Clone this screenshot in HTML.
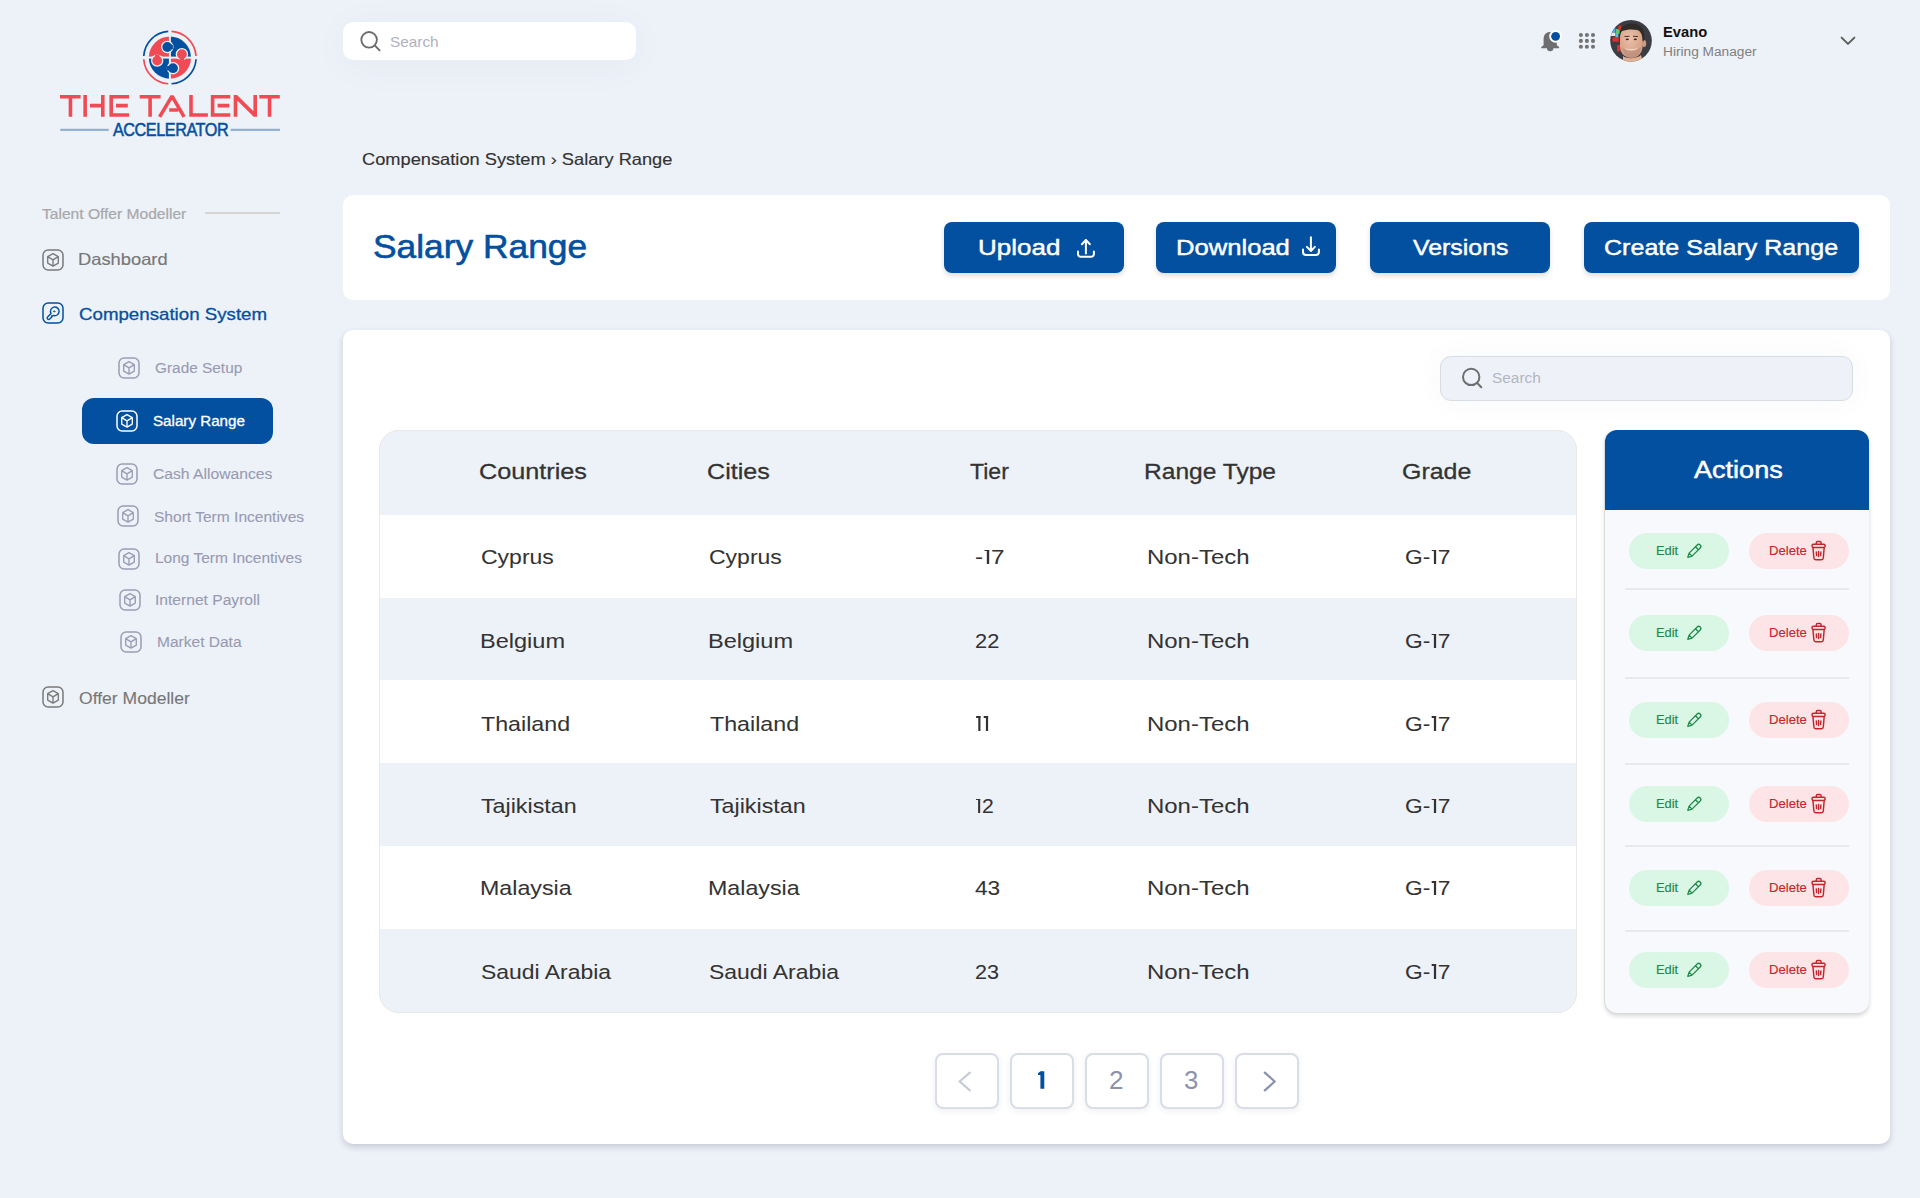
<!DOCTYPE html>
<html><head><meta charset="utf-8"><title>Salary Range</title>
<style>
html,body{margin:0;padding:0;width:1920px;height:1198px;overflow:hidden;background:#EDF1F8;font-family:"Liberation Sans",sans-serif;}
.a{position:absolute;box-sizing:border-box;}
.t{position:absolute;white-space:nowrap;line-height:1;transform-origin:0 0;z-index:5;}
svg{position:absolute;overflow:visible;}
.one{display:inline-block;width:0.33em;height:0.69em;position:relative}.one::before{content:"";position:absolute;left:0.143em;width:0.093em;top:0;bottom:0;background:currentColor}.one::after{content:"";position:absolute;left:0.06em;width:0.18em;top:0;height:0.073em;background:currentColor}
</style></head><body>
<svg style="left:0;top:0" width="300" height="150" viewBox="0 0 300 150"><path d="M143.75 55.95 A26.2 26.2 0 0 1 168.25 31.45" stroke="#0350A0" stroke-width="1.7" fill="none"/><path d="M171.55 31.45 A26.2 26.2 0 0 1 196.05 55.95" stroke="#F04B55" stroke-width="1.7" fill="none"/><path d="M196.05 59.25 A26.2 26.2 0 0 1 171.55 83.75" stroke="#0350A0" stroke-width="1.7" fill="none"/><path d="M168.25 83.75 A26.2 26.2 0 0 1 143.75 59.25" stroke="#F04B55" stroke-width="1.7" fill="none"/><path d="M169.9 57.6 L148.80 57.60 A21.1 21.1 0 0 1 169.90 36.50 Z" fill="#F04B55"/><path d="M169.9 57.6 L169.90 36.50 A21.1 21.1 0 0 1 191.00 57.60 Z" fill="#0350A0"/><path d="M169.9 57.6 L191.00 57.60 A21.1 21.1 0 0 1 169.90 78.70 Z" fill="#F04B55"/><path d="M169.9 57.6 L169.90 78.70 A21.1 21.1 0 0 1 148.80 57.60 Z" fill="#0350A0"/><rect x="168.9" y="35.6" width="2.0" height="44" fill="#EDF1F8"/><rect x="147.9" y="56.6" width="44" height="2.0" fill="#EDF1F8"/><circle cx="167.3" cy="47.0" r="6.2" fill="#EDF1F8"/><circle cx="181.9" cy="54.2" r="6.2" fill="#EDF1F8"/><circle cx="157.2" cy="60.6" r="6.2" fill="#EDF1F8"/><circle cx="173.0" cy="68.2" r="6.2" fill="#EDF1F8"/><rect x="167.3" y="44.8" width="5.599999999999994" height="4.4" fill="#0350A0"/><circle cx="167.3" cy="47.0" r="4.9" fill="#0350A0"/><rect x="179.70000000000002" y="54.2" width="4.4" height="6.399999999999999" fill="#F04B55"/><circle cx="181.9" cy="54.2" r="4.9" fill="#F04B55"/><rect x="155.0" y="54.6" width="4.4" height="6.0" fill="#F04B55"/><circle cx="157.2" cy="60.6" r="4.9" fill="#F04B55"/><rect x="166.9" y="66.0" width="6.099999999999994" height="4.4" fill="#0350A0"/><circle cx="173.0" cy="68.2" r="4.9" fill="#0350A0"/><path d="M60 96.7 L80.6 96.7 M70.45 94.9 L70.45 116.8 M85.15 94.9 L85.15 116.8 M102.8 94.9 L102.8 116.8 M90 105.6 L102.8 105.6 M111.2 94.9 L111.2 116.8 M109.5 96.7 L129 96.7 M116 105.6 L127.8 105.6 M109.5 115.0 L129 115.0 M139.7 96.7 L160.6 96.7 M150.1 94.9 L150.1 116.8 M159.6 116.8 L172.0 96.10000000000001 L184.1 116.8 M169.2 110.0 L178.2 110.0 M191.0 94.9 L191.0 116.8 M189.3 115.0 L207.9 115.0 M212.6 94.9 L212.6 116.8 M210.9 96.7 L230.3 96.7 M217.6 105.6 L229.3 105.6 M210.9 115.0 L230.3 115.0 M235.5 116.8 L235.5 94.9 M235.5 96.10000000000001 L255.2 115.6 M255.2 116.8 L255.2 94.9 M259.3 96.7 L279.8 96.7 M269.55 94.9 L269.55 116.8" stroke="#F04B55" stroke-width="3.6" fill="none" stroke-linejoin="bevel"/><rect x="60.3" y="128.8" width="48.5" height="2.1" fill="#8EAED2"/><rect x="230.6" y="128.8" width="49.4" height="2.1" fill="#8EAED2"/></svg>
<div class="a" style="left:205px;top:212px;width:75px;height:2px;background:#D7D5D2"></div>
<svg style="left:42.25px;top:249.15px" width="22" height="22" viewBox="0 0 22 22"><g fill="none" stroke="#7A7A7A" stroke-linejoin="round" stroke-linecap="round"><rect x="1" y="1" width="20" height="20" rx="5.2" stroke-width="1.5"/><path d="M11 4.7 L16.3 7.6 L16.3 14.1 L11 17.1 L5.7 14.1 L5.7 7.6 Z M5.7 7.6 L11 10.8 L16.3 7.6 M11 10.8 L11 17.1" stroke-width="1.35"/></g></svg>
<svg style="left:42.25px;top:302.15px" width="22" height="22" viewBox="0 0 22 22"><g fill="none" stroke="#0350A0" stroke-linejoin="round" stroke-linecap="round"><rect x="1" y="1" width="20" height="20" rx="5.2" stroke-width="1.5"/><path d="M9.0 11.4 A4.3 4.3 0 1 1 11.3 13.4 L10.6 14.1 L9.6 13.9 L9.8 15.0 L7.7 17.1 A1.45 1.45 0 0 1 5.6 15.0 Z" stroke-width="1.4"/><circle cx="12.2" cy="9.4" r="0.6" fill="#0350A0" stroke-width="0.9"/></g></svg>
<div class="a" style="left:82px;top:398px;width:191px;height:46px;border-radius:12px;background:#0350A0"></div>
<svg style="left:118.15px;top:357.25px" width="22" height="22" viewBox="0 0 22 22"><g fill="none" stroke="#9A9DB4" stroke-linejoin="round" stroke-linecap="round"><rect x="1" y="1" width="20" height="20" rx="5.2" stroke-width="1.5"/><path d="M11 4.7 L16.3 7.6 L16.3 14.1 L11 17.1 L5.7 14.1 L5.7 7.6 Z M5.7 7.6 L11 10.8 L16.3 7.6 M11 10.8 L11 17.1" stroke-width="1.35"/></g></svg>
<svg style="left:116.35px;top:463.15px" width="22" height="22" viewBox="0 0 22 22"><g fill="none" stroke="#9A9DB4" stroke-linejoin="round" stroke-linecap="round"><rect x="1" y="1" width="20" height="20" rx="5.2" stroke-width="1.5"/><path d="M11 4.7 L16.3 7.6 L16.3 14.1 L11 17.1 L5.7 14.1 L5.7 7.6 Z M5.7 7.6 L11 10.8 L16.3 7.6 M11 10.8 L11 17.1" stroke-width="1.35"/></g></svg>
<svg style="left:117.35px;top:505.35px" width="22" height="22" viewBox="0 0 22 22"><g fill="none" stroke="#9A9DB4" stroke-linejoin="round" stroke-linecap="round"><rect x="1" y="1" width="20" height="20" rx="5.2" stroke-width="1.5"/><path d="M11 4.7 L16.3 7.6 L16.3 14.1 L11 17.1 L5.7 14.1 L5.7 7.6 Z M5.7 7.6 L11 10.8 L16.3 7.6 M11 10.8 L11 17.1" stroke-width="1.35"/></g></svg>
<svg style="left:118.05px;top:547.55px" width="22" height="22" viewBox="0 0 22 22"><g fill="none" stroke="#9A9DB4" stroke-linejoin="round" stroke-linecap="round"><rect x="1" y="1" width="20" height="20" rx="5.2" stroke-width="1.5"/><path d="M11 4.7 L16.3 7.6 L16.3 14.1 L11 17.1 L5.7 14.1 L5.7 7.6 Z M5.7 7.6 L11 10.8 L16.3 7.6 M11 10.8 L11 17.1" stroke-width="1.35"/></g></svg>
<svg style="left:119.15px;top:589.45px" width="22" height="22" viewBox="0 0 22 22"><g fill="none" stroke="#9A9DB4" stroke-linejoin="round" stroke-linecap="round"><rect x="1" y="1" width="20" height="20" rx="5.2" stroke-width="1.5"/><path d="M11 4.7 L16.3 7.6 L16.3 14.1 L11 17.1 L5.7 14.1 L5.7 7.6 Z M5.7 7.6 L11 10.8 L16.3 7.6 M11 10.8 L11 17.1" stroke-width="1.35"/></g></svg>
<svg style="left:120.15px;top:631.45px" width="22" height="22" viewBox="0 0 22 22"><g fill="none" stroke="#9A9DB4" stroke-linejoin="round" stroke-linecap="round"><rect x="1" y="1" width="20" height="20" rx="5.2" stroke-width="1.5"/><path d="M11 4.7 L16.3 7.6 L16.3 14.1 L11 17.1 L5.7 14.1 L5.7 7.6 Z M5.7 7.6 L11 10.8 L16.3 7.6 M11 10.8 L11 17.1" stroke-width="1.35"/></g></svg>
<svg style="left:116.0px;top:410.15px" width="22" height="22" viewBox="0 0 22 22"><g fill="none" stroke="#FFFFFF" stroke-linejoin="round" stroke-linecap="round"><rect x="1" y="1" width="20" height="20" rx="5.2" stroke-width="1.5"/><path d="M11 4.7 L16.3 7.6 L16.3 14.1 L11 17.1 L5.7 14.1 L5.7 7.6 Z M5.7 7.6 L11 10.8 L16.3 7.6 M11 10.8 L11 17.1" stroke-width="1.35"/></g></svg>
<svg style="left:42.25px;top:685.85px" width="22" height="22" viewBox="0 0 22 22"><g fill="none" stroke="#7A7A7A" stroke-linejoin="round" stroke-linecap="round"><rect x="1" y="1" width="20" height="20" rx="5.2" stroke-width="1.5"/><path d="M11 4.7 L16.3 7.6 L16.3 14.1 L11 17.1 L5.7 14.1 L5.7 7.6 Z M5.7 7.6 L11 10.8 L16.3 7.6 M11 10.8 L11 17.1" stroke-width="1.35"/></g></svg>
<div class="a" style="left:343px;top:22px;width:293px;height:38px;border-radius:10px;background:#fff;box-shadow:0 5px 40px rgba(60,80,140,0.04)"></div>
<svg style="left:355px;top:26px" width="32" height="32" viewBox="355 26 32 32"><circle cx="369.1" cy="39.8" r="7.8" stroke="#6B6B6B" stroke-width="1.8" fill="none"/><path d="M375.2 45.9 L379.6 50.3" stroke="#6B6B6B" stroke-width="1.9" stroke-linecap="round"/></svg>
<svg style="left:1535px;top:24px" width="30" height="32" viewBox="1535 24 30 32"><path d="M1543.6 45.2 L1543.6 38.8 C1543.6 34.6 1546.4 31.9 1550.2 31.9 C1554.0 31.9 1556.8 34.6 1556.8 38.8 L1556.8 45.2 L1559.1 47.0 L1559.1 48.3 L1541.3 48.3 L1541.3 47.0 Z" fill="#6E6E72"/><path d="M1547.0 48.0 L1553.4 48.0 A3.2 3.2 0 0 1 1547.0 48.0 Z" fill="#6E6E72"/><circle cx="1555.6" cy="36.3" r="6.4" fill="#FFFFFF"/><circle cx="1555.6" cy="36.3" r="4.4" fill="#0350A0"/></svg>
<svg style="left:1576px;top:30px" width="22" height="22" viewBox="1576 30 22 22"><circle cx="1580.9" cy="35.0" r="2.05" fill="#737373"/><circle cx="1580.9" cy="40.9" r="2.05" fill="#737373"/><circle cx="1580.9" cy="46.8" r="2.05" fill="#737373"/><circle cx="1586.9" cy="35.0" r="2.05" fill="#737373"/><circle cx="1586.9" cy="40.9" r="2.05" fill="#737373"/><circle cx="1586.9" cy="46.8" r="2.05" fill="#737373"/><circle cx="1593.0" cy="35.0" r="2.05" fill="#737373"/><circle cx="1593.0" cy="40.9" r="2.05" fill="#737373"/><circle cx="1593.0" cy="46.8" r="2.05" fill="#737373"/></svg>
<svg style="left:1610px;top:20px" width="42" height="42" viewBox="0 0 42 42"><defs><clipPath id="av"><circle cx="21" cy="20.8" r="20.8"/></clipPath><radialGradient id="sk" cx="0.45" cy="0.35" r="0.7"><stop offset="0" stop-color="#EBC0A8"/><stop offset="1" stop-color="#D29A80"/></radialGradient></defs><g clip-path="url(#av)">
<rect width="42" height="42" fill="#3C3D42"/>
<rect x="2" y="8" width="3.4" height="4.7" fill="#4FA8E0"/><rect x="5.8" y="8.9" width="3.8" height="5.1" fill="#5CC878"/><rect x="0.8" y="12.7" width="4.6" height="3.3" fill="#EDE3E6"/><rect x="5.4" y="14" width="2.9" height="3.7" fill="#5BB8EC"/><rect x="8.3" y="5.6" width="2.9" height="4.2" fill="#D8302C"/><rect x="2.5" y="17.3" width="6.2" height="4.5" fill="#D8302C"/><rect x="7" y="25" width="3.4" height="6.4" fill="#D8302C"/>
<path d="M13 42 L13 36 C16 39 27 39 31 35 L33 42 Z" fill="#E4B092"/>
<path d="M10 18 C10 10 14 7.5 21 7.5 C28 7.5 32.5 10 32.5 18 L32.5 27 C32 34 27 38 21.5 38 C15.5 38 10.5 34 10 27 Z" fill="url(#sk)"/>
<ellipse cx="34" cy="23.5" rx="2.2" ry="3.6" fill="#CF9A80"/>
<path d="M9.5 17 C9 8 14 3.5 22 3.5 C30 3.5 35 8 34.5 19 L33 22 C32.5 15 31 11 27 10 C22 9 16 9.5 12 11 C10.5 12.5 10 15 9.5 17 Z" fill="#2F2B28"/>
<path d="M12 27 C13 34 17 38 21.5 38 C26 38 30.5 34 31 27 C28 30 25 31 21.5 31 C18 31 15 30 12 27 Z" fill="#A88070" opacity="0.45"/>
<path d="M15 27.5 C17.5 30 25 30 27.5 27.5 C26 31 17 31 15 27.5 Z" fill="#F6EEE9"/>
<ellipse cx="17.3" cy="19.3" rx="1.6" ry="0.9" fill="#3A2820"/><ellipse cx="25.3" cy="19.3" rx="1.6" ry="0.9" fill="#3A2820"/>
<path d="M14.5 16.5 L19.5 16.2 M23 16.2 L28 16.5" stroke="#4A3428" stroke-width="1.1"/>
</g></svg>
<svg style="left:1836px;top:32px" width="24" height="18" viewBox="1836 32 24 18"><path d="M1841.6 37.6 L1848.0 43.9 L1854.4 37.6" stroke="#5A5A5A" stroke-width="1.9" fill="none" stroke-linecap="round" stroke-linejoin="round"/></svg>
<div class="a" style="left:343px;top:195px;width:1547px;height:105px;border-radius:10px;background:#fff"></div>
<div class="a" style="left:944px;top:222px;width:180px;height:51px;border-radius:8px;background:#0350A0;box-shadow:0 3px 5px rgba(0,0,0,0.13)"></div>
<div class="a" style="left:1156px;top:222px;width:180px;height:51px;border-radius:8px;background:#0350A0;box-shadow:0 3px 5px rgba(0,0,0,0.13)"></div>
<div class="a" style="left:1370px;top:222px;width:180px;height:51px;border-radius:8px;background:#0350A0;box-shadow:0 3px 5px rgba(0,0,0,0.13)"></div>
<div class="a" style="left:1584px;top:222px;width:275px;height:51px;border-radius:8px;background:#0350A0;box-shadow:0 3px 5px rgba(0,0,0,0.13)"></div>
<svg style="left:1070px;top:232px;z-index:6" width="30" height="30" viewBox="1070 232 30 30"><g stroke="#fff" stroke-width="2" fill="none" stroke-linecap="round" stroke-linejoin="round"><path d="M1085.9 240.0 L1085.9 253.5 M1081.9 244.2 L1085.9 240.0 L1089.9 244.2"/><path d="M1078.0 251.4 L1078.0 254.0 A2.8 2.8 0 0 0 1080.8 256.8 L1091.1 256.8 A2.8 2.8 0 0 0 1093.9 254.0 L1093.9 251.4"/></g></svg>
<svg style="left:1296px;top:232px;z-index:6" width="30" height="30" viewBox="1296 232 30 30"><g stroke="#fff" stroke-width="2" fill="none" stroke-linecap="round" stroke-linejoin="round"><path d="M1310.9 237.3 L1310.9 251.0 M1306.9 246.9 L1310.9 251.0 L1314.9 246.9"/><path d="M1303.0 249.4 L1303.0 252.1 A2.8 2.8 0 0 0 1305.8 254.9 L1316.1 254.9 A2.8 2.8 0 0 0 1318.9 252.1 L1318.9 249.4"/></g></svg>
<div class="a" style="left:343px;top:330px;width:1547px;height:814px;border-radius:10px;background:#fff;box-shadow:0 3px 6px rgba(40,50,80,0.2)"></div>
<div class="a" style="left:1440px;top:356px;width:413px;height:45px;border-radius:11px;background:#EEF2F8;border:1px solid #D8DCE5;box-shadow:0 0 30px rgba(60,80,140,0.04)"></div>
<svg style="left:1458px;top:364px" width="30" height="30" viewBox="1458 364 30 30"><circle cx="1471.2" cy="376.9" r="8.2" stroke="#6E6E6E" stroke-width="2" fill="none"/><path d="M1477.4 383.3 L1481.3 387.3" stroke="#6E6E6E" stroke-width="2" stroke-linecap="round"/></svg>
<div class="a" style="left:379px;top:430px;width:1198px;height:583px;border-radius:20px;border:1.5px solid #E9E9EA;overflow:hidden;background:#fff"><div style="position:absolute;left:-1.5px;top:-1.5px;right:-1.5px;bottom:-1.5px"><div style="position:absolute;left:0;top:0;width:100%;height:85px;background:#EDF1F8"></div><div style="position:absolute;left:0;top:85px;width:100%;height:84px;background:#FFFFFF"></div><div style="position:absolute;left:0;top:168px;width:100%;height:83.5px;background:#EDF1F8"></div><div style="position:absolute;left:0;top:250.5px;width:100%;height:83.5px;background:#FFFFFF"></div><div style="position:absolute;left:0;top:333px;width:100%;height:84px;background:#EDF1F8"></div><div style="position:absolute;left:0;top:416px;width:100%;height:84px;background:#FFFFFF"></div><div style="position:absolute;left:0;top:499px;width:100%;height:85px;background:#EDF1F8"></div></div></div>
<div class="a" style="left:379px;top:430px;width:1198px;height:583px;border-radius:20px;border:1.5px solid #E9E9EA;z-index:2"></div>
<div class="a" style="left:1605px;top:430px;width:264px;height:583px;border-radius:12px;background:#F7F9FD;box-shadow:0 3px 4px rgba(0,0,0,0.16),-1px 0 1px rgba(0,0,0,0.09)"></div>
<div class="a" style="left:1605px;top:430px;width:264px;height:80px;border-radius:12px 12px 0 0;background:#0350A0"></div>
<div class="a" style="left:1625px;top:588.2px;width:224px;height:2px;background:#E8E9EA"></div>
<div class="a" style="left:1625px;top:676.6px;width:224px;height:2px;background:#E8E9EA"></div>
<div class="a" style="left:1625px;top:762.6px;width:224px;height:2px;background:#E8E9EA"></div>
<div class="a" style="left:1625px;top:845.4px;width:224px;height:2px;background:#E8E9EA"></div>
<div class="a" style="left:1625px;top:929.8px;width:224px;height:2px;background:#E8E9EA"></div>
<div class="a" style="left:1629px;top:533px;width:100px;height:36px;border-radius:18px;background:#DAF6E5"></div>
<div class="a" style="left:1749px;top:533px;width:100px;height:36px;border-radius:18px;background:#FDE5E7"></div>
<svg style="left:1684px;top:540px;z-index:6" width="22" height="22" viewBox="1684 540 22 22"><g transform="translate(1684 540)" stroke="#1E8A4A" stroke-width="1.25" fill="none" stroke-linejoin="round" stroke-linecap="round"><path d="M5.1 13.1 L13.2 5.0 A2.1 2.1 0 0 1 16.2 8.0 L8.0 16.1 L3.8 17.3 Z M5.1 13.1 L8.0 16.1 M11.5 6.8 L14.4 9.7"/></g></svg>
<svg style="left:1806px;top:538px;z-index:6" width="24" height="26" viewBox="0 0 24 26"><g stroke="#C0262D" stroke-width="1.45" fill="none" stroke-linejoin="round" stroke-linecap="round"><path d="M10.3 6.1 L10.3 4.8 A1.3 1.3 0 0 1 11.6 3.5 L13.8 3.5 A1.3 1.3 0 0 1 15.1 4.8 L15.1 6.1"/><rect x="6.0" y="6.2" width="13.1" height="3.2" rx="1.4"/><path d="M6.9 9.4 L7.9 20.0 A1.8 1.8 0 0 0 9.7 21.7 L15.5 21.7 A1.8 1.8 0 0 0 17.3 20.0 L18.2 9.4"/><path d="M10.3 14.0 L10.6 17.6 M12.6 13.4 L12.6 18.4 M14.9 14.0 L14.6 17.6"/></g></svg>
<div class="a" style="left:1629px;top:615px;width:100px;height:36px;border-radius:18px;background:#DAF6E5"></div>
<div class="a" style="left:1749px;top:615px;width:100px;height:36px;border-radius:18px;background:#FDE5E7"></div>
<svg style="left:1684px;top:622px;z-index:6" width="22" height="22" viewBox="1684 540 22 22"><g transform="translate(1684 540)" stroke="#1E8A4A" stroke-width="1.25" fill="none" stroke-linejoin="round" stroke-linecap="round"><path d="M5.1 13.1 L13.2 5.0 A2.1 2.1 0 0 1 16.2 8.0 L8.0 16.1 L3.8 17.3 Z M5.1 13.1 L8.0 16.1 M11.5 6.8 L14.4 9.7"/></g></svg>
<svg style="left:1806px;top:620px;z-index:6" width="24" height="26" viewBox="0 0 24 26"><g stroke="#C0262D" stroke-width="1.45" fill="none" stroke-linejoin="round" stroke-linecap="round"><path d="M10.3 6.1 L10.3 4.8 A1.3 1.3 0 0 1 11.6 3.5 L13.8 3.5 A1.3 1.3 0 0 1 15.1 4.8 L15.1 6.1"/><rect x="6.0" y="6.2" width="13.1" height="3.2" rx="1.4"/><path d="M6.9 9.4 L7.9 20.0 A1.8 1.8 0 0 0 9.7 21.7 L15.5 21.7 A1.8 1.8 0 0 0 17.3 20.0 L18.2 9.4"/><path d="M10.3 14.0 L10.6 17.6 M12.6 13.4 L12.6 18.4 M14.9 14.0 L14.6 17.6"/></g></svg>
<div class="a" style="left:1629px;top:702px;width:100px;height:36px;border-radius:18px;background:#DAF6E5"></div>
<div class="a" style="left:1749px;top:702px;width:100px;height:36px;border-radius:18px;background:#FDE5E7"></div>
<svg style="left:1684px;top:709px;z-index:6" width="22" height="22" viewBox="1684 540 22 22"><g transform="translate(1684 540)" stroke="#1E8A4A" stroke-width="1.25" fill="none" stroke-linejoin="round" stroke-linecap="round"><path d="M5.1 13.1 L13.2 5.0 A2.1 2.1 0 0 1 16.2 8.0 L8.0 16.1 L3.8 17.3 Z M5.1 13.1 L8.0 16.1 M11.5 6.8 L14.4 9.7"/></g></svg>
<svg style="left:1806px;top:707px;z-index:6" width="24" height="26" viewBox="0 0 24 26"><g stroke="#C0262D" stroke-width="1.45" fill="none" stroke-linejoin="round" stroke-linecap="round"><path d="M10.3 6.1 L10.3 4.8 A1.3 1.3 0 0 1 11.6 3.5 L13.8 3.5 A1.3 1.3 0 0 1 15.1 4.8 L15.1 6.1"/><rect x="6.0" y="6.2" width="13.1" height="3.2" rx="1.4"/><path d="M6.9 9.4 L7.9 20.0 A1.8 1.8 0 0 0 9.7 21.7 L15.5 21.7 A1.8 1.8 0 0 0 17.3 20.0 L18.2 9.4"/><path d="M10.3 14.0 L10.6 17.6 M12.6 13.4 L12.6 18.4 M14.9 14.0 L14.6 17.6"/></g></svg>
<div class="a" style="left:1629px;top:786px;width:100px;height:36px;border-radius:18px;background:#DAF6E5"></div>
<div class="a" style="left:1749px;top:786px;width:100px;height:36px;border-radius:18px;background:#FDE5E7"></div>
<svg style="left:1684px;top:793px;z-index:6" width="22" height="22" viewBox="1684 540 22 22"><g transform="translate(1684 540)" stroke="#1E8A4A" stroke-width="1.25" fill="none" stroke-linejoin="round" stroke-linecap="round"><path d="M5.1 13.1 L13.2 5.0 A2.1 2.1 0 0 1 16.2 8.0 L8.0 16.1 L3.8 17.3 Z M5.1 13.1 L8.0 16.1 M11.5 6.8 L14.4 9.7"/></g></svg>
<svg style="left:1806px;top:791px;z-index:6" width="24" height="26" viewBox="0 0 24 26"><g stroke="#C0262D" stroke-width="1.45" fill="none" stroke-linejoin="round" stroke-linecap="round"><path d="M10.3 6.1 L10.3 4.8 A1.3 1.3 0 0 1 11.6 3.5 L13.8 3.5 A1.3 1.3 0 0 1 15.1 4.8 L15.1 6.1"/><rect x="6.0" y="6.2" width="13.1" height="3.2" rx="1.4"/><path d="M6.9 9.4 L7.9 20.0 A1.8 1.8 0 0 0 9.7 21.7 L15.5 21.7 A1.8 1.8 0 0 0 17.3 20.0 L18.2 9.4"/><path d="M10.3 14.0 L10.6 17.6 M12.6 13.4 L12.6 18.4 M14.9 14.0 L14.6 17.6"/></g></svg>
<div class="a" style="left:1629px;top:870px;width:100px;height:36px;border-radius:18px;background:#DAF6E5"></div>
<div class="a" style="left:1749px;top:870px;width:100px;height:36px;border-radius:18px;background:#FDE5E7"></div>
<svg style="left:1684px;top:877px;z-index:6" width="22" height="22" viewBox="1684 540 22 22"><g transform="translate(1684 540)" stroke="#1E8A4A" stroke-width="1.25" fill="none" stroke-linejoin="round" stroke-linecap="round"><path d="M5.1 13.1 L13.2 5.0 A2.1 2.1 0 0 1 16.2 8.0 L8.0 16.1 L3.8 17.3 Z M5.1 13.1 L8.0 16.1 M11.5 6.8 L14.4 9.7"/></g></svg>
<svg style="left:1806px;top:875px;z-index:6" width="24" height="26" viewBox="0 0 24 26"><g stroke="#C0262D" stroke-width="1.45" fill="none" stroke-linejoin="round" stroke-linecap="round"><path d="M10.3 6.1 L10.3 4.8 A1.3 1.3 0 0 1 11.6 3.5 L13.8 3.5 A1.3 1.3 0 0 1 15.1 4.8 L15.1 6.1"/><rect x="6.0" y="6.2" width="13.1" height="3.2" rx="1.4"/><path d="M6.9 9.4 L7.9 20.0 A1.8 1.8 0 0 0 9.7 21.7 L15.5 21.7 A1.8 1.8 0 0 0 17.3 20.0 L18.2 9.4"/><path d="M10.3 14.0 L10.6 17.6 M12.6 13.4 L12.6 18.4 M14.9 14.0 L14.6 17.6"/></g></svg>
<div class="a" style="left:1629px;top:952px;width:100px;height:36px;border-radius:18px;background:#DAF6E5"></div>
<div class="a" style="left:1749px;top:952px;width:100px;height:36px;border-radius:18px;background:#FDE5E7"></div>
<svg style="left:1684px;top:959px;z-index:6" width="22" height="22" viewBox="1684 540 22 22"><g transform="translate(1684 540)" stroke="#1E8A4A" stroke-width="1.25" fill="none" stroke-linejoin="round" stroke-linecap="round"><path d="M5.1 13.1 L13.2 5.0 A2.1 2.1 0 0 1 16.2 8.0 L8.0 16.1 L3.8 17.3 Z M5.1 13.1 L8.0 16.1 M11.5 6.8 L14.4 9.7"/></g></svg>
<svg style="left:1806px;top:957px;z-index:6" width="24" height="26" viewBox="0 0 24 26"><g stroke="#C0262D" stroke-width="1.45" fill="none" stroke-linejoin="round" stroke-linecap="round"><path d="M10.3 6.1 L10.3 4.8 A1.3 1.3 0 0 1 11.6 3.5 L13.8 3.5 A1.3 1.3 0 0 1 15.1 4.8 L15.1 6.1"/><rect x="6.0" y="6.2" width="13.1" height="3.2" rx="1.4"/><path d="M6.9 9.4 L7.9 20.0 A1.8 1.8 0 0 0 9.7 21.7 L15.5 21.7 A1.8 1.8 0 0 0 17.3 20.0 L18.2 9.4"/><path d="M10.3 14.0 L10.6 17.6 M12.6 13.4 L12.6 18.4 M14.9 14.0 L14.6 17.6"/></g></svg>
<div class="a" style="left:935px;top:1053px;width:64px;height:56px;border-radius:8px;background:#fff;border:2px solid #D9DDE5;box-shadow:0 2px 6px rgba(40,50,80,0.08)"></div>
<div class="a" style="left:1010px;top:1053px;width:64px;height:56px;border-radius:8px;background:#fff;border:2px solid #D9DDE5;box-shadow:0 2px 6px rgba(40,50,80,0.08)"></div>
<div class="a" style="left:1085px;top:1053px;width:64px;height:56px;border-radius:8px;background:#fff;border:2px solid #D9DDE5;box-shadow:0 2px 6px rgba(40,50,80,0.08)"></div>
<div class="a" style="left:1160px;top:1053px;width:64px;height:56px;border-radius:8px;background:#fff;border:2px solid #D9DDE5;box-shadow:0 2px 6px rgba(40,50,80,0.08)"></div>
<div class="a" style="left:1235px;top:1053px;width:64px;height:56px;border-radius:8px;background:#fff;border:2px solid #D9DDE5;box-shadow:0 2px 6px rgba(40,50,80,0.08)"></div>
<svg style="left:950px;top:1066px;z-index:6" width="30" height="30" viewBox="950 1066 30 30"><path d="M969.9 1072.6 L959.6 1081.5 L969.9 1090.4" stroke="#C6CBD4" stroke-width="2.2" fill="none" stroke-linecap="round" stroke-linejoin="round"/></svg>
<svg style="left:1255px;top:1066px;z-index:6" width="30" height="30" viewBox="1255 1066 30 30"><path d="M1264.8 1072.6 L1274.7 1081.5 L1264.8 1090.4" stroke="#8A90AE" stroke-width="2.2" fill="none" stroke-linecap="round" stroke-linejoin="round"/></svg>
<svg style="left:1030px;top:1065px;z-index:6" width="20" height="30" viewBox="1030 1065 20 30"><path d="M1040.4 1071.3 L1044.3 1071.3 L1044.3 1088.8 L1040.4 1088.8 L1040.4 1075.0 L1038.0 1075.0 L1038.0 1073.2 Z" fill="#0350A0"/></svg>
<div class="t" style="left:41.64px;top:206.00px;font-size:15.12px;color:#A8A8A8;font-weight:400;transform:scaleX(1.0308);letter-spacing:0.000px;-webkit-text-stroke:0.2px #A8A8A8;">Talent Offer Modeller</div>
<div class="t" style="left:78.43px;top:252.45px;font-size:16.72px;color:#777777;font-weight:400;transform:scaleX(1.0969);letter-spacing:0.000px;-webkit-text-stroke:0.15px #777777;">Dashboard</div>
<div class="t" style="left:78.98px;top:306.28px;font-size:17.15px;color:#0350A0;font-weight:400;transform:scaleX(1.0905);letter-spacing:0.000px;-webkit-text-stroke:0.3px #0350A0;">Compensation System</div>
<div class="t" style="left:154.80px;top:361.42px;font-size:14.39px;color:#989BB2;font-weight:400;transform:scaleX(1.0704);letter-spacing:0.000px;-webkit-text-stroke:0.1px #989BB2;">Grade Setup</div>
<div class="t" style="left:152.68px;top:467.32px;font-size:14.39px;color:#989BB2;font-weight:400;transform:scaleX(1.0901);letter-spacing:0.000px;-webkit-text-stroke:0.1px #989BB2;">Cash Allowances</div>
<div class="t" style="left:153.69px;top:509.62px;font-size:14.39px;color:#989BB2;font-weight:400;transform:scaleX(1.0815);letter-spacing:0.000px;-webkit-text-stroke:0.1px #989BB2;">Short Term Incentives</div>
<div class="t" style="left:154.52px;top:551.42px;font-size:14.39px;color:#989BB2;font-weight:400;transform:scaleX(1.0770);letter-spacing:0.000px;-webkit-text-stroke:0.1px #989BB2;">Long Term Incentives</div>
<div class="t" style="left:155.24px;top:593.32px;font-size:14.39px;color:#989BB2;font-weight:400;transform:scaleX(1.0857);letter-spacing:0.000px;-webkit-text-stroke:0.1px #989BB2;">Internet Payroll</div>
<div class="t" style="left:156.52px;top:635.22px;font-size:14.39px;color:#989BB2;font-weight:400;transform:scaleX(1.0800);letter-spacing:0.000px;-webkit-text-stroke:0.1px #989BB2;">Market Data</div>
<div class="t" style="left:153.22px;top:414.22px;font-size:14.39px;color:#FFFFFF;font-weight:400;transform:scaleX(1.0551);letter-spacing:0.000px;-webkit-text-stroke:0.3px #FFFFFF;">Salary Range</div>
<div class="t" style="left:78.69px;top:689.82px;font-size:16.28px;color:#777777;font-weight:400;transform:scaleX(1.0781);letter-spacing:0.000px;-webkit-text-stroke:0.1px #777777;">Offer Modeller</div>
<div class="t" style="left:112.83px;top:121.73px;font-size:17.44px;color:#0350A0;font-weight:400;transform:scaleX(0.9300);letter-spacing:-0.491px;-webkit-text-stroke:0.5px #0350A0;">ACCELERATOR</div>
<div class="t" style="left:389.87px;top:35.51px;font-size:13.81px;color:#B0B2C0;font-weight:400;transform:scaleX(1.1119);letter-spacing:0.000px;">Search</div>
<div class="t" style="left:1663.49px;top:25.25px;font-size:14.53px;color:#111111;font-weight:700;transform:scaleX(1.0143);letter-spacing:0.000px;">Evano</div>
<div class="t" style="left:1663.45px;top:45.02px;font-size:13.08px;color:#7F7F7F;font-weight:400;transform:scaleX(1.0470);letter-spacing:0.000px;">Hiring Manager</div>
<div class="t" style="left:362.41px;top:150.82px;font-size:16.28px;color:#333333;font-weight:400;transform:scaleX(1.1221);letter-spacing:0.000px;-webkit-text-stroke:0.15px #333333;">Compensation System › Salary Range</div>
<div class="t" style="left:373.45px;top:230.59px;font-size:32.85px;color:#0350A0;font-weight:400;transform:scaleX(1.0763);letter-spacing:0.000px;-webkit-text-stroke:0.6px #0350A0;">Salary Range</div>
<div class="t" style="left:977.76px;top:236.65px;font-size:22.38px;color:#FFFFFF;font-weight:400;transform:scaleX(1.1612);letter-spacing:0.000px;-webkit-text-stroke:0.45px #FFFFFF;">Upload</div>
<div class="t" style="left:1176.48px;top:236.65px;font-size:22.38px;color:#FFFFFF;font-weight:400;transform:scaleX(1.1442);letter-spacing:0.000px;-webkit-text-stroke:0.45px #FFFFFF;">Download</div>
<div class="t" style="left:1412.63px;top:236.65px;font-size:22.38px;color:#FFFFFF;font-weight:400;transform:scaleX(1.1117);letter-spacing:0.000px;-webkit-text-stroke:0.45px #FFFFFF;">Versions</div>
<div class="t" style="left:1604.18px;top:236.65px;font-size:22.38px;color:#FFFFFF;font-weight:400;transform:scaleX(1.1204);letter-spacing:0.000px;-webkit-text-stroke:0.45px #FFFFFF;">Create Salary Range</div>
<div class="t" style="left:1491.87px;top:372.49px;font-size:13.95px;color:#B3B5C2;font-weight:400;transform:scaleX(1.1047);letter-spacing:0.000px;">Search</div>
<div class="t" style="left:479.49px;top:460.30px;font-size:22.67px;color:#333333;font-weight:400;transform:scaleX(1.1129);letter-spacing:0.000px;-webkit-text-stroke:0.3px #333333;">Countries</div>
<div class="t" style="left:707.29px;top:460.30px;font-size:22.67px;color:#333333;font-weight:400;transform:scaleX(1.1091);letter-spacing:0.000px;-webkit-text-stroke:0.3px #333333;">Cities</div>
<div class="t" style="left:970.15px;top:460.30px;font-size:22.67px;color:#333333;font-weight:400;transform:scaleX(1.0172);letter-spacing:0.000px;-webkit-text-stroke:0.3px #333333;">Tier</div>
<div class="t" style="left:1144.30px;top:460.30px;font-size:22.67px;color:#333333;font-weight:400;transform:scaleX(1.0843);letter-spacing:0.000px;-webkit-text-stroke:0.3px #333333;">Range Type</div>
<div class="t" style="left:1401.90px;top:460.30px;font-size:22.67px;color:#333333;font-weight:400;transform:scaleX(1.1000);letter-spacing:0.000px;-webkit-text-stroke:0.3px #333333;">Grade</div>
<div class="t" style="left:1693.58px;top:458.12px;font-size:24.42px;color:#FFFFFF;font-weight:400;transform:scaleX(1.1082);letter-spacing:0.000px;-webkit-text-stroke:0.5px #FFFFFF;">Actions</div>
<div class="t" style="left:480.68px;top:546.85px;font-size:20.49px;color:#333333;font-weight:400;transform:scaleX(1.1225);letter-spacing:0.000px;-webkit-text-stroke:0.05px #333333;">Cyprus</div>
<div class="t" style="left:709.18px;top:546.85px;font-size:20.49px;color:#333333;font-weight:400;transform:scaleX(1.1225);letter-spacing:0.000px;-webkit-text-stroke:0.05px #333333;">Cyprus</div>
<div class="t" style="left:975.31px;top:546.85px;font-size:20.49px;color:#333333;font-weight:400;transform:scaleX(1.1828);letter-spacing:0.000px;-webkit-text-stroke:0.05px #333333;">-<i class="one"></i>7</div>
<div class="t" style="left:1146.65px;top:546.85px;font-size:20.49px;color:#333333;font-weight:400;transform:scaleX(1.1692);letter-spacing:0.000px;-webkit-text-stroke:0.05px #333333;">Non-Tech</div>
<div class="t" style="left:1405.14px;top:546.85px;font-size:20.49px;color:#333333;font-weight:400;transform:scaleX(1.1115);letter-spacing:0.000px;-webkit-text-stroke:0.05px #333333;">G-<i class="one"></i>7</div>
<div class="t" style="left:479.79px;top:631.05px;font-size:20.49px;color:#333333;font-weight:400;transform:scaleX(1.1493);letter-spacing:0.000px;-webkit-text-stroke:0.05px #333333;">Belgium</div>
<div class="t" style="left:708.29px;top:631.05px;font-size:20.49px;color:#333333;font-weight:400;transform:scaleX(1.1493);letter-spacing:0.000px;-webkit-text-stroke:0.05px #333333;">Belgium</div>
<div class="t" style="left:974.83px;top:631.05px;font-size:20.49px;color:#333333;font-weight:400;transform:scaleX(1.0651);letter-spacing:0.000px;-webkit-text-stroke:0.05px #333333;">22</div>
<div class="t" style="left:1146.65px;top:631.05px;font-size:20.49px;color:#333333;font-weight:400;transform:scaleX(1.1692);letter-spacing:0.000px;-webkit-text-stroke:0.05px #333333;">Non-Tech</div>
<div class="t" style="left:1405.14px;top:631.05px;font-size:20.49px;color:#333333;font-weight:400;transform:scaleX(1.1115);letter-spacing:0.000px;-webkit-text-stroke:0.05px #333333;">G-<i class="one"></i>7</div>
<div class="t" style="left:481.23px;top:713.55px;font-size:20.49px;color:#333333;font-weight:400;transform:scaleX(1.1336);letter-spacing:0.000px;-webkit-text-stroke:0.05px #333333;">Thailand</div>
<div class="t" style="left:709.73px;top:713.55px;font-size:20.49px;color:#333333;font-weight:400;transform:scaleX(1.1336);letter-spacing:0.000px;-webkit-text-stroke:0.05px #333333;">Thailand</div>
<div class="t" style="left:974.81px;top:713.55px;font-size:20.49px;color:#333333;font-weight:400;transform:scaleX(1.0909);letter-spacing:0.000px;-webkit-text-stroke:0.05px #333333;"><i class="one"></i><i class="one"></i></div>
<div class="t" style="left:1146.65px;top:713.55px;font-size:20.49px;color:#333333;font-weight:400;transform:scaleX(1.1692);letter-spacing:0.000px;-webkit-text-stroke:0.05px #333333;">Non-Tech</div>
<div class="t" style="left:1405.14px;top:713.55px;font-size:20.49px;color:#333333;font-weight:400;transform:scaleX(1.1115);letter-spacing:0.000px;-webkit-text-stroke:0.05px #333333;">G-<i class="one"></i>7</div>
<div class="t" style="left:481.23px;top:796.05px;font-size:20.49px;color:#333333;font-weight:400;transform:scaleX(1.1345);letter-spacing:0.000px;-webkit-text-stroke:0.05px #333333;">Tajikistan</div>
<div class="t" style="left:709.73px;top:796.05px;font-size:20.49px;color:#333333;font-weight:400;transform:scaleX(1.1345);letter-spacing:0.000px;-webkit-text-stroke:0.05px #333333;">Tajikistan</div>
<div class="t" style="left:974.87px;top:796.05px;font-size:20.49px;color:#333333;font-weight:400;transform:scaleX(1.0338);letter-spacing:0.000px;-webkit-text-stroke:0.05px #333333;"><i class="one"></i>2</div>
<div class="t" style="left:1146.65px;top:796.05px;font-size:20.49px;color:#333333;font-weight:400;transform:scaleX(1.1692);letter-spacing:0.000px;-webkit-text-stroke:0.05px #333333;">Non-Tech</div>
<div class="t" style="left:1405.14px;top:796.05px;font-size:20.49px;color:#333333;font-weight:400;transform:scaleX(1.1115);letter-spacing:0.000px;-webkit-text-stroke:0.05px #333333;">G-<i class="one"></i>7</div>
<div class="t" style="left:479.82px;top:878.45px;font-size:20.49px;color:#333333;font-weight:400;transform:scaleX(1.1329);letter-spacing:0.000px;-webkit-text-stroke:0.05px #333333;">Malaysia</div>
<div class="t" style="left:708.32px;top:878.45px;font-size:20.49px;color:#333333;font-weight:400;transform:scaleX(1.1329);letter-spacing:0.000px;-webkit-text-stroke:0.05px #333333;">Malaysia</div>
<div class="t" style="left:975.35px;top:878.45px;font-size:20.49px;color:#333333;font-weight:400;transform:scaleX(1.1070);letter-spacing:0.000px;-webkit-text-stroke:0.05px #333333;">43</div>
<div class="t" style="left:1146.65px;top:878.45px;font-size:20.49px;color:#333333;font-weight:400;transform:scaleX(1.1692);letter-spacing:0.000px;-webkit-text-stroke:0.05px #333333;">Non-Tech</div>
<div class="t" style="left:1405.14px;top:878.45px;font-size:20.49px;color:#333333;font-weight:400;transform:scaleX(1.1115);letter-spacing:0.000px;-webkit-text-stroke:0.05px #333333;">G-<i class="one"></i>7</div>
<div class="t" style="left:480.68px;top:961.55px;font-size:20.49px;color:#333333;font-weight:400;transform:scaleX(1.1193);letter-spacing:0.000px;-webkit-text-stroke:0.05px #333333;">Saudi Arabia</div>
<div class="t" style="left:709.18px;top:961.55px;font-size:20.49px;color:#333333;font-weight:400;transform:scaleX(1.1193);letter-spacing:0.000px;-webkit-text-stroke:0.05px #333333;">Saudi Arabia</div>
<div class="t" style="left:974.85px;top:961.55px;font-size:20.49px;color:#333333;font-weight:400;transform:scaleX(1.0524);letter-spacing:0.000px;-webkit-text-stroke:0.05px #333333;">23</div>
<div class="t" style="left:1146.65px;top:961.55px;font-size:20.49px;color:#333333;font-weight:400;transform:scaleX(1.1692);letter-spacing:0.000px;-webkit-text-stroke:0.05px #333333;">Non-Tech</div>
<div class="t" style="left:1405.14px;top:961.55px;font-size:20.49px;color:#333333;font-weight:400;transform:scaleX(1.1115);letter-spacing:0.000px;-webkit-text-stroke:0.05px #333333;">G-<i class="one"></i>7</div>
<div class="t" style="left:1656.49px;top:544.73px;font-size:12.72px;color:#1E8A4A;font-weight:400;transform:scaleX(1.0119);letter-spacing:0.000px;-webkit-text-stroke:0.15px #1E8A4A;">Edit</div>
<div class="t" style="left:1768.97px;top:544.73px;font-size:12.72px;color:#C4262E;font-weight:400;transform:scaleX(1.0284);letter-spacing:0.000px;-webkit-text-stroke:0.15px #C4262E;">Delete</div>
<div class="t" style="left:1656.49px;top:626.73px;font-size:12.72px;color:#1E8A4A;font-weight:400;transform:scaleX(1.0119);letter-spacing:0.000px;-webkit-text-stroke:0.15px #1E8A4A;">Edit</div>
<div class="t" style="left:1768.97px;top:626.73px;font-size:12.72px;color:#C4262E;font-weight:400;transform:scaleX(1.0284);letter-spacing:0.000px;-webkit-text-stroke:0.15px #C4262E;">Delete</div>
<div class="t" style="left:1656.49px;top:713.73px;font-size:12.72px;color:#1E8A4A;font-weight:400;transform:scaleX(1.0119);letter-spacing:0.000px;-webkit-text-stroke:0.15px #1E8A4A;">Edit</div>
<div class="t" style="left:1768.97px;top:713.73px;font-size:12.72px;color:#C4262E;font-weight:400;transform:scaleX(1.0284);letter-spacing:0.000px;-webkit-text-stroke:0.15px #C4262E;">Delete</div>
<div class="t" style="left:1656.49px;top:797.73px;font-size:12.72px;color:#1E8A4A;font-weight:400;transform:scaleX(1.0119);letter-spacing:0.000px;-webkit-text-stroke:0.15px #1E8A4A;">Edit</div>
<div class="t" style="left:1768.97px;top:797.73px;font-size:12.72px;color:#C4262E;font-weight:400;transform:scaleX(1.0284);letter-spacing:0.000px;-webkit-text-stroke:0.15px #C4262E;">Delete</div>
<div class="t" style="left:1656.49px;top:881.73px;font-size:12.72px;color:#1E8A4A;font-weight:400;transform:scaleX(1.0119);letter-spacing:0.000px;-webkit-text-stroke:0.15px #1E8A4A;">Edit</div>
<div class="t" style="left:1768.97px;top:881.73px;font-size:12.72px;color:#C4262E;font-weight:400;transform:scaleX(1.0284);letter-spacing:0.000px;-webkit-text-stroke:0.15px #C4262E;">Delete</div>
<div class="t" style="left:1656.49px;top:963.73px;font-size:12.72px;color:#1E8A4A;font-weight:400;transform:scaleX(1.0119);letter-spacing:0.000px;-webkit-text-stroke:0.15px #1E8A4A;">Edit</div>
<div class="t" style="left:1768.97px;top:963.73px;font-size:12.72px;color:#C4262E;font-weight:400;transform:scaleX(1.0284);letter-spacing:0.000px;-webkit-text-stroke:0.15px #C4262E;">Delete</div>
<div class="t" style="left:1109.13px;top:1067.69px;font-size:25.87px;color:#8C91AE;font-weight:400;transform:scaleX(1.0128);letter-spacing:0.000px;">2</div>
<div class="t" style="left:1184.30px;top:1067.69px;font-size:25.87px;color:#8C91AE;font-weight:400;transform:scaleX(0.9959);letter-spacing:0.000px;">3</div>
</body></html>
